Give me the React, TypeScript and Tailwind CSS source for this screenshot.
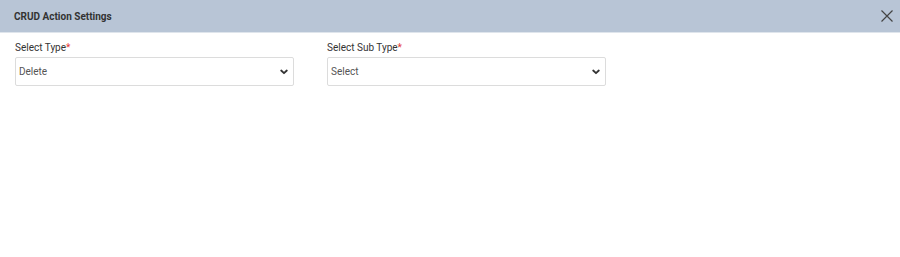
import React from "react";

function Chevron() {
  return (
    <svg width="8" height="6" viewBox="0 0 8 6" className="shrink-0">
      <path d="M1.2 1.5 L4 4.2 L6.8 1.5" fill="none" stroke="#333" strokeWidth="1.8" strokeLinecap="round" strokeLinejoin="round" />
    </svg>
  );
}

function Field({ label, value }: { label: string; value: string }) {
  return (
    <div className="flex flex-col w-[279px]">
      <label className="text-[10px] leading-[12px] text-[#333] mb-[3px]">
        {label}
        <span className="text-[#e53935]">*</span>
      </label>
      <div className="h-[29px] border border-[#dcdcdc] rounded-[2px] bg-white flex items-center justify-between pl-[3px] pr-[5px]">
        <span className="text-[10px] text-[#555]">{value}</span>
        <Chevron />
      </div>
    </div>
  );
}

export default function App() {
  return (
    <div className="w-[900px] h-[257px] bg-white" style={{ fontFamily: "Roboto, 'Liberation Sans', sans-serif" }}>
      <div className="h-[33px] bg-[#b8c5d6] border-b border-[#dfe5ec] flex items-center justify-between pl-[14px] pr-[6px]">
        <span className="text-[10px] font-bold text-[#333]">CRUD Action Settings</span>
        <svg width="14" height="14" viewBox="0 0 14 14">
          <path d="M1.5 1.5 L12.5 12.5 M12.5 1.5 L1.5 12.5" stroke="#444" strokeWidth="1.2" fill="none" />
        </svg>
      </div>
      <div className="flex gap-[33px] pl-[15px] pt-[9px]">
        <Field label="Select Type" value="Delete" />
        <Field label="Select Sub Type" value="Select" />
      </div>
    </div>
  );
}
